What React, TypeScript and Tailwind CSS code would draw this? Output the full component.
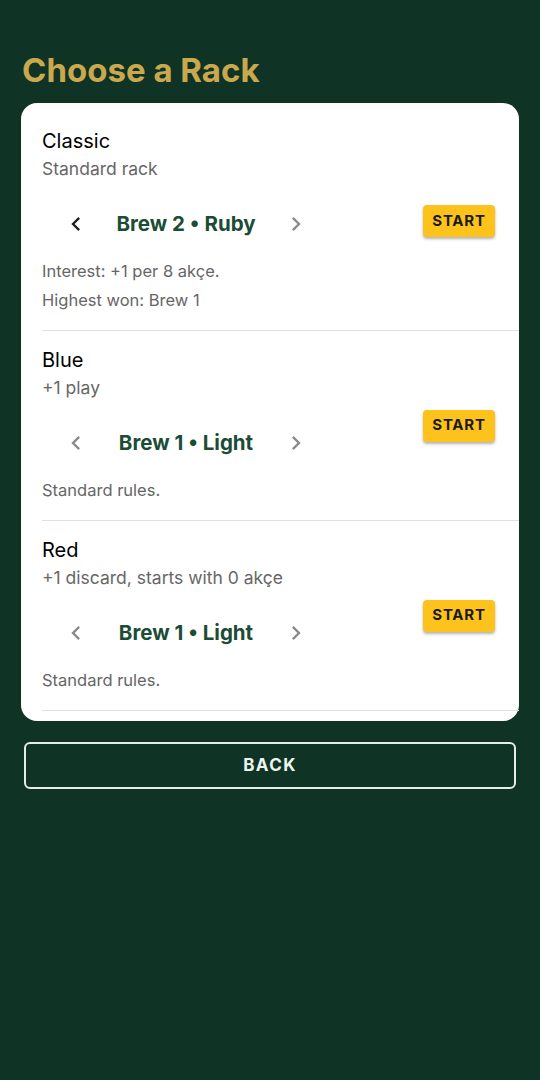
import React from 'react';

type Rack = {
  name: string;
  desc: string;
  brew: string;
  canPrev: boolean;
  canNext: boolean;
  notes: string[];
};

const racks: Rack[] = [
  {
    name: 'Classic',
    desc: 'Standard rack',
    brew: 'Brew 2 • Ruby',
    canPrev: true,
    canNext: false,
    notes: ['Interest: +1 per 8 akçe.', 'Highest won: Brew 1'],
  },
  {
    name: 'Blue',
    desc: '+1 play',
    brew: 'Brew 1 • Light',
    canPrev: false,
    canNext: false,
    notes: ['Standard rules.'],
  },
  {
    name: 'Red',
    desc: '+1 discard, starts with 0 akçe',
    brew: 'Brew 1 • Light',
    canPrev: false,
    canNext: false,
    notes: ['Standard rules.'],
  },
];

function Chevron({ dir, enabled }: { dir: 'left' | 'right'; enabled: boolean }) {
  const d =
    dir === 'left'
      ? 'M15.41 7.41 14 6l-6 6 6 6 1.41-1.41L10.83 12z'
      : 'M10 6 8.59 7.41 13.17 12l-4.58 4.59L10 18l6-6z';
  return (
    <button className="flex h-12 w-12 items-center justify-center">
      <svg
        viewBox="0 0 24 24"
        className={`h-7 w-7 ${enabled ? 'fill-[#1f1f1f]' : 'fill-[#8a8a8a]'}`}
      >
        <path d={d} />
      </svg>
    </button>
  );
}

function RackItem({ rack }: { rack: Rack }) {
  return (
    <div className="ml-[21px] flex items-center border-b border-[#e0e0e0] pr-6 pt-[15px] pb-[19px]">
      <div className="flex-1">
        <div className="text-[20px] leading-7 text-black">{rack.name}</div>
        <div className="mt-0.5 text-[17.5px] leading-6 text-[#666666]">{rack.desc}</div>
        <div className="mt-[19px] flex items-center pl-[10px]">
          <Chevron dir="left" enabled={rack.canPrev} />
          <div className="w-[172px] text-center text-[20.5px] font-bold leading-7 text-[#1b4d36]">
            {rack.brew}
          </div>
          <Chevron dir="right" enabled={rack.canNext} />
        </div>
        <div className="mt-3 flex flex-col gap-[7px]">
          {rack.notes.map((n) => (
            <div key={n} className="text-[16.5px] leading-[22px] text-[#666666]">
              {n}
            </div>
          ))}
        </div>
      </div>
      <button className="mt-1 h-8 w-[72px] rounded bg-[#fdc21c] text-[15px] font-bold tracking-[0.05em] text-[#1a1a1a] shadow-[0_2px_3px_rgba(0,0,0,0.3)]">
        START
      </button>
    </div>
  );
}

export default function App() {
  return (
    <div
      className="min-h-[1080px] bg-[#0f3325] px-[21px] pt-[50px]"
      style={{ fontFamily: 'Inter, Roboto, "Noto Sans", sans-serif' }}
    >
      <h1 className="ml-px text-[33px] font-bold leading-10 text-[#c9a84e]">Choose a Rack</h1>
      <div className="mt-[13px] rounded-2xl bg-white pt-[9px] pb-[10px]">
        {racks.map((r) => (
          <RackItem key={r.name} rack={r} />
        ))}
      </div>
      <div className="mt-[21px] px-[3px]">
        <button className="h-[47px] w-full rounded-md border-2 border-[#e6ede8] text-[17px] font-bold tracking-[0.08em] text-[#eef3ef]">
          BACK
        </button>
      </div>
    </div>
  );
}
